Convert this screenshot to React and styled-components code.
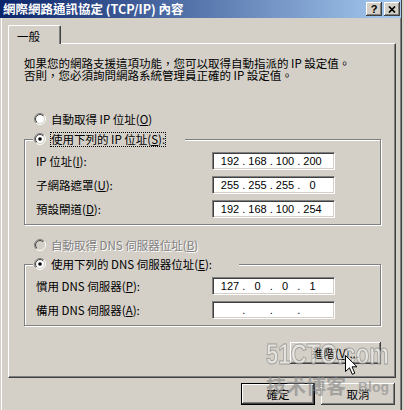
import React from 'react';
import styled, { createGlobalStyle } from 'styled-components';

const GlobalStyle = createGlobalStyle`
    html, body {
        margin: 0;
        padding: 0;
        background: #d4d0c8;
    }
    body {
        font-family: "Noto Sans CJK TC", "Noto Sans CJK SC", sans-serif;
        font-size: 11.5px;
        color: #000000;
    }
`

function RadioMark({ checked, disabled }) {
    return (
        <svg width="12" height="12" viewBox="0 0 12 12">
            <defs>
                <linearGradient id="radioOuter" x1="0" y1="0" x2="1" y2="1">
                    <stop offset="0.5" stopColor="#808080" />
                    <stop offset="0.5" stopColor="#ffffff" />
                </linearGradient>
                <linearGradient id="radioInner" x1="0" y1="0" x2="1" y2="1">
                    <stop offset="0.5" stopColor="#404040" />
                    <stop offset="0.5" stopColor="#d4d0c8" />
                </linearGradient>
            </defs>
            <circle cx="6" cy="6" r="5.5" fill="none" stroke="url(#radioOuter)" />
            <circle cx="6" cy="6" r="4.5" fill={disabled ? '#d4d0c8' : '#ffffff'} stroke="url(#radioInner)" />
            {checked && <circle cx="6" cy="6" r="1.8" fill="#000000" />}
        </svg>
    )
}

function IpField({ parts }) {
    return (
        <IpBox>
            {parts.map((p, i) => (
                <React.Fragment key={i}>
                    <Octet>{p}</Octet>
                    {i < 3 && <Dot>.</Dot>}
                </React.Fragment>
            ))}
        </IpBox>
    )
}

function App() {
    return (
        <>
            <GlobalStyle />
            <Window>
                <TitleBar>
                    <Title>網際網路通訊協定 (TCP/IP) 內容</Title>
                    <CaptionButtons>
                        <CaptionButton><HelpGlyph>?</HelpGlyph></CaptionButton>
                        <CaptionButton>
                            <svg width="8" height="7" viewBox="0 0 8 7">
                                <path d="M1 0.5 L7 6.5 M7 0.5 L1 6.5" stroke="#000" strokeWidth="1.7" />
                            </svg>
                        </CaptionButton>
                    </CaptionButtons>
                </TitleBar>

                <TabStrip>
                    <Tab>一般</Tab>
                </TabStrip>

                <Panel>
                    <Description>
                        如果您的網路支援這項功能，您可以取得自動指派的 IP 設定值。<br />
                        否則，您必須詢問網路系統管理員正確的 IP 設定值。
                    </Description>

                    <RadioRow $top={30}>
                        <RadioMark />
                        <span>自動取得 IP 位址(<u>O</u>)</span>
                    </RadioRow>

                    <Group $top={4}>
                        <Legend $tail={20}>
                            <RadioMark checked />
                            <FocusText>使用下列的 IP 位址(<u>S</u>):</FocusText>
                        </Legend>
                        <Rows>
                            <FieldRow>
                                <span>IP 位址(<u>I</u>):</span>
                                <IpField parts={['192', '168', '100', '200']} />
                            </FieldRow>
                            <FieldRow>
                                <span>子網路遮罩(<u>U</u>):</span>
                                <IpField parts={['255', '255', '255', '0']} />
                            </FieldRow>
                            <FieldRow>
                                <span>預設閘道(<u>D</u>):</span>
                                <IpField parts={['192', '168', '100', '254']} />
                            </FieldRow>
                        </Rows>
                    </Group>

                    <RadioRow $top={12} $disabled>
                        <RadioMark disabled />
                        <span>自動取得 DNS 伺服器位址(<u>B</u>)</span>
                    </RadioRow>

                    <Group $top={3}>
                        <Legend $tail={27}>
                            <RadioMark checked />
                            <span>使用下列的 DNS 伺服器位址(<u>E</u>):</span>
                        </Legend>
                        <Rows>
                            <FieldRow>
                                <span>慣用 DNS 伺服器(<u>P</u>):</span>
                                <IpField parts={['127', '0', '0', '1']} />
                            </FieldRow>
                            <FieldRow>
                                <span>備用 DNS 伺服器(<u>A</u>):</span>
                                <IpField parts={['', '', '', '']} />
                            </FieldRow>
                        </Rows>
                    </Group>

                    <AdvancedButton>進階(<u>V</u>)...</AdvancedButton>
                </Panel>

                <ButtonRow>
                    <PushButton $default>確定</PushButton>
                    <PushButton>取消</PushButton>
                </ButtonRow>

                <WatermarkBig>51CTO.com</WatermarkBig>
                <WatermarkCn>技术博客</WatermarkCn>
                <WatermarkBlog>Blog</WatermarkBlog>
                <Cursor width="13" height="21" viewBox="0 0 13 21">
                    <path d="M0.5 0.5 L0.5 16.5 L4.5 12.8 L7.3 19.3 L9.8 18.2 L7.1 11.8 L12 11.8 Z"
                        fill="#ffffff" stroke="#000000" strokeWidth="1" strokeLinejoin="miter" />
                </Cursor>
            </Window>
        </>
    )
}

export default App;

const raised = `
    box-shadow:
        inset -1px -1px 0 #404040,
        inset 1px 1px 0 #ffffff,
        inset -2px -2px 0 #808080,
        inset 2px 2px 0 #d4d0c8;
`

const Window = styled.div`
    position: relative;
    width: 402px;
    height: 410px;
    box-sizing: border-box;
    background: #d4d0c8;
    border-right: 1px solid #404040;
    box-shadow: inset 1px 0 0 #d4d0c8, inset 2px 0 0 #ffffff, inset -1px 0 0 #808080;
    overflow: hidden;
`

const TitleBar = styled.div`
    height: 18px;
    display: flex;
    align-items: center;
    padding: 0 1px 0 3px;
    background: linear-gradient(to right, #0a246a, #a6caf0);
`

const Title = styled.div`
    flex: 1;
    color: #ffffff;
    font-weight: bold;
    font-size: 12.5px;
    line-height: 18px;
    white-space: nowrap;
`

const CaptionButtons = styled.div`
    display: flex;
    gap: 2px;
`

const CaptionButton = styled.div`
    width: 16px;
    height: 14px;
    box-sizing: border-box;
    background: #d4d0c8;
    display: flex;
    align-items: center;
    justify-content: center;
    ${raised}
`

const HelpGlyph = styled.span`
    font-family: "Liberation Sans", sans-serif;
    font-weight: bold;
    font-size: 11px;
    line-height: 12px;
`

const TabStrip = styled.div`
    display: flex;
    margin-top: 7px;
    padding-left: 8px;
`

const Tab = styled.div`
    position: relative;
    z-index: 1;
    width: 53px;
    height: 19px;
    margin-bottom: -1px;
    box-sizing: border-box;
    padding: 1px 0 0 8px;
    display: flex;
    align-items: center;
    background: #d4d0c8;
    border-top: 1px solid #ffffff;
    border-left: 1px solid #ffffff;
    border-right: 1px solid #404040;
    border-radius: 2px 2px 0 0;
    box-shadow: inset -1px 0 0 #808080;
`

const Panel = styled.div`
    margin-left: 8px;
    width: 388px;
    height: 335px;
    box-sizing: border-box;
    border: 1px solid;
    border-color: #ffffff #404040 #404040 #ffffff;
    box-shadow: inset -1px -1px 0 #808080;
    padding: 13px 14px 0 15px;
    display: flex;
    flex-direction: column;
`

const Description = styled.div`
    line-height: 12px;
    white-space: nowrap;
`

const RadioRow = styled.div`
    display: flex;
    align-items: center;
    gap: 5px;
    height: 16px;
    margin-top: ${p => p.$top}px;
    margin-left: 10px;
    white-space: nowrap;
    color: ${p => p.$disabled ? '#808080' : '#000000'};
    text-shadow: ${p => p.$disabled ? '1px 1px 0 #ffffff' : 'none'};
`

const Group = styled.fieldset`
    margin: ${p => p.$top}px 0 0;
    padding: 5px 0 6px;
    min-width: 0;
    border: 1px solid #808080;
    box-shadow: inset 1px 1px 0 #ffffff, 1px 1px 0 #ffffff;
`

const Legend = styled.legend`
    display: flex;
    align-items: center;
    gap: 5px;
    height: 16px;
    margin-left: 8px;
    padding: 0 ${p => p.$tail}px 0 1px;
    background: #d4d0c8;
    white-space: nowrap;
`

const FocusText = styled.span`
    outline: 1px dotted #000000;
    line-height: 13px;
`

const Rows = styled.div`
    display: flex;
    flex-direction: column;
    gap: 6px;
    padding: 0 45px 0 11px;
`

const FieldRow = styled.div`
    display: flex;
    align-items: center;
    justify-content: space-between;
    height: 18px;
    white-space: nowrap;
`

const IpBox = styled.div`
    width: 123px;
    height: 18px;
    box-sizing: border-box;
    background: #ffffff;
    border: 1px solid;
    border-color: #808080 #ffffff #ffffff #808080;
    box-shadow: inset 1px 1px 0 #404040, inset -1px -1px 0 #d4d0c8;
    display: flex;
    align-items: center;
    padding-left: 7px;
    font-family: "Liberation Sans", sans-serif;
    font-size: 11px;
`

const Octet = styled.span`
    width: 20px;
    text-align: center;
`

const Dot = styled.span`
    width: 7.5px;
    text-align: center;
`

const PushButton = styled.button`
    width: 74px;
    height: 22px;
    box-sizing: border-box;
    padding: 0;
    background: #d4d0c8;
    font-family: inherit;
    font-size: 11.5px;
    color: #000000;
    border: ${p => p.$default ? '1px solid #000000' : 'none'};
    ${raised}
`

const AdvancedButton = styled(PushButton)`
    align-self: flex-end;
    width: 91px;
    margin-top: 16px;
`

const ButtonRow = styled.div`
    display: flex;
    justify-content: flex-end;
    gap: 6px;
    margin-top: 5px;
    padding-right: 6px;
`

const WatermarkBig = styled.div`
    position: absolute;
    left: 266px;
    top: 339px;
    font-family: "Liberation Sans", sans-serif;
    font-weight: bold;
    font-size: 30px;
    line-height: 30px;
    transform: scaleX(0.74);
    transform-origin: left top;
    color: rgba(240, 240, 236, 0.6);
    -webkit-text-stroke: 1px rgba(110, 110, 110, 0.55);
    pointer-events: none;
`

const WatermarkCn = styled.div`
    position: absolute;
    left: 266px;
    top: 375px;
    font-family: "Noto Sans CJK SC", sans-serif;
    font-weight: bold;
    font-size: 20px;
    line-height: 22px;
    color: rgba(130, 130, 130, 0.6);
    pointer-events: none;
`

const WatermarkBlog = styled.div`
    position: absolute;
    left: 358px;
    top: 379px;
    font-family: "Liberation Sans", sans-serif;
    font-weight: bold;
    font-size: 14px;
    color: rgba(140, 140, 140, 0.65);
    pointer-events: none;
`

const Cursor = styled.svg`
    position: absolute;
    left: 345px;
    top: 355px;
`
